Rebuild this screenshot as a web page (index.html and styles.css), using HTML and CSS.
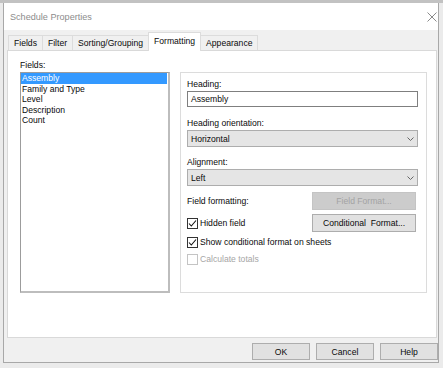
FILE: index.html
```html
<!DOCTYPE html>
<html>
<head>
<meta charset="utf-8">
<link rel="stylesheet" href="styles.css">
</head>
<body>
<div class="screen">
  <div class="dialog">
    <div class="titlebar">
      <span class="title">Schedule Properties</span>
      <svg class="close" width="10" height="10" viewBox="0 0 10 10"><path d="M0.5 0.5 L9.5 9.5 M9.5 0.5 L0.5 9.5" stroke="#8a8a8a" stroke-width="1" fill="none"/></svg>
    </div>
    <div class="client">
      <div class="tabs">
        <div class="tab">Fields</div>
        <div class="tab">Filter</div>
        <div class="tab">Sorting/Grouping</div>
        <div class="tab active">Formatting</div>
        <div class="tab">Appearance</div>
      </div>
      <div class="panel">
        <div class="fields-label">Fields:</div>
        <ul class="list">
          <li class="selected">Assembly</li>
          <li>Family and Type</li>
          <li>Level</li>
          <li>Description</li>
          <li>Count</li>
        </ul>
        <div class="group">
          <div class="field field-heading">
            <div class="f-label">Heading:</div>
            <div class="textbox">Assembly</div>
          </div>
          <div class="field field-orient">
            <div class="f-label">Heading orientation:</div>
            <div class="combo"><span>Horizontal</span><svg width="7" height="4" viewBox="0 0 7 4"><path d="M0.5 0.5 L3.5 3.5 L6.5 0.5" stroke="#666" fill="none"/></svg></div>
          </div>
          <div class="field field-align">
            <div class="f-label">Alignment:</div>
            <div class="combo"><span>Left</span><svg width="7" height="4" viewBox="0 0 7 4"><path d="M0.5 0.5 L3.5 3.5 L6.5 0.5" stroke="#666" fill="none"/></svg></div>
          </div>
          <div class="row row-btn">
            <span>Field formatting:</span>
            <div class="btn disabled">Field Format...</div>
          </div>
          <div class="row row-btn row-gap">
            <label class="check"><svg width="11" height="11" viewBox="0 0 11 11"><rect x="0.5" y="0.5" width="10" height="10" fill="#fff" stroke="#333"/><path d="M2 5.5 L4.3 8 L9 2.5" fill="none" stroke="#111" stroke-width="1.1"/></svg>Hidden field</label>
            <div class="btn">Conditional&nbsp; Format...</div>
          </div>
          <div class="row row-check">
            <label class="check"><svg width="11" height="11" viewBox="0 0 11 11"><rect x="0.5" y="0.5" width="10" height="10" fill="#fff" stroke="#333"/><path d="M2 5.5 L4.3 8 L9 2.5" fill="none" stroke="#111" stroke-width="1.1"/></svg>Show conditional format on sheets</label>
          </div>
          <div class="row row-check">
            <label class="check off"><svg width="11" height="11" viewBox="0 0 11 11"><rect x="0.5" y="0.5" width="10" height="10" fill="#fff" stroke="#c4c4c4"/></svg>Calculate totals</label>
          </div>
        </div>
      </div>
      <div class="footer">
        <div class="btn fbtn">OK</div>
        <div class="btn fbtn">Cancel</div>
        <div class="btn fbtn">Help</div>
      </div>
    </div>
  </div>
</div>
</body>
</html>
```
FILE: styles.css
```css
html, body {
  margin: 0;
  padding: 0;
}
body {
  font-family: "Liberation Sans", Arial, sans-serif;
  font-size: 8.6px;
  color: #0a0a0a;
}
.screen {
  width: 443px;
  height: 368px;
  box-sizing: border-box;
  border-top: 3px solid #c2c2c2;
  background: #ebebeb;
  overflow: hidden;
}
.dialog {
  margin-left: 3px;
  width: 436px;
  height: 360px;
  box-sizing: border-box;
  border: 1px solid #a8a8a8;
  border-top: none;
  background: #f0f0f0;
  display: flex;
  flex-direction: column;
}
.titlebar {
  height: 27px;
  flex: none;
  background: #fff;
  display: flex;
  align-items: center;
  justify-content: space-between;
  padding: 0 1px 0 6px;
}
.title {
  font-size: 9.1px;
  color: #8c8c8c;
}
.close {
  display: block;
}
.client {
  flex: 1;
  display: flex;
  flex-direction: column;
  padding: 2px 0 0 3px;
}
.tabs {
  display: flex;
  align-items: flex-end;
  height: 18px;
  margin-left: 1px;
  position: relative;
  z-index: 1;
}
.tab {
  height: 14px;
  line-height: 14px;
  padding: 0 5px;
  border: 1px solid #dcdcdc;
  border-bottom: none;
  margin-right: -1px;
  background: #f0f0f0;
}
.tab.active {
  height: 18px;
  line-height: 16px;
  background: #fff;
  margin-bottom: -1px;
  position: relative;
  z-index: 2;
}
.panel {
  width: 430px;
  height: 288px;
  box-sizing: border-box;
  border: 1px solid #d9d9d9;
  background: #fff;
  display: grid;
  grid-template-columns: 150px 247px;
  grid-template-rows: 12px 221px;
  column-gap: 10px;
  row-gap: 1px;
  padding: 8px 0 0 12px;
  align-content: start;
}
.fields-label {
  line-height: 12px;
  grid-column: 1;
  grid-row: 1;
}
.list {
  grid-column: 1;
  grid-row: 2;
  margin: 0;
  padding: 0 1px 0 0;
  list-style: none;
  box-sizing: border-box;
  border: 1px solid #9c9c9c;
  border-right: 2px solid #bdbdbd;
  border-bottom: 2px solid #bdbdbd;
}
.list li {
  height: 10.5px;
  line-height: 10.5px;
  padding-left: 1px;
}
.list li.selected {
  background: #3399ff;
  color: #fff;
}
.group {
  grid-column: 2;
  grid-row: 2;
  box-sizing: border-box;
  border: 1px solid #dcdcdc;
  padding: 5px 8px 0 6px;
  display: flex;
  flex-direction: column;
}
.field-heading {
  margin-bottom: 10px;
}
.field-orient {
  margin-bottom: 9px;
}
.field-align {
  margin-bottom: 6px;
}
.f-label {
  line-height: 12px;
  margin-bottom: 1px;
}
.textbox {
  height: 16px;
  box-sizing: border-box;
  border: 1px solid #7f7f7f;
  line-height: 14px;
  padding-left: 3px;
}
.combo {
  height: 17px;
  box-sizing: border-box;
  border: 1px solid #adadad;
  background: #e5e5e5;
  display: flex;
  align-items: center;
  justify-content: space-between;
  padding: 0 3px 0 3px;
}
.combo svg {
  display: block;
}
.row {
  display: flex;
  align-items: center;
  justify-content: space-between;
}
.row-btn {
  height: 18px;
}
.row-gap {
  margin-top: 4px;
}
.row-check {
  height: 14px;
  margin-top: 3px;
}
.btn {
  box-sizing: border-box;
  border: 1px solid #adadad;
  background: #e1e1e1;
  display: flex;
  align-items: center;
  justify-content: center;
}
.row .btn {
  width: 104px;
  height: 18px;
  margin-right: 2px;
}
.btn.disabled {
  background: #cccccc;
  border-color: #c4c4c4;
  color: #a3a3a3;
}
.check {
  display: flex;
  align-items: center;
  gap: 2px;
}
.check svg {
  display: block;
}
.check.off {
  color: #a6a6a6;
}
.footer {
  display: flex;
  justify-content: flex-end;
  gap: 6px;
  padding: 5px 0 0 0;
}
.fbtn {
  width: 58px;
  height: 17px;
}
```
